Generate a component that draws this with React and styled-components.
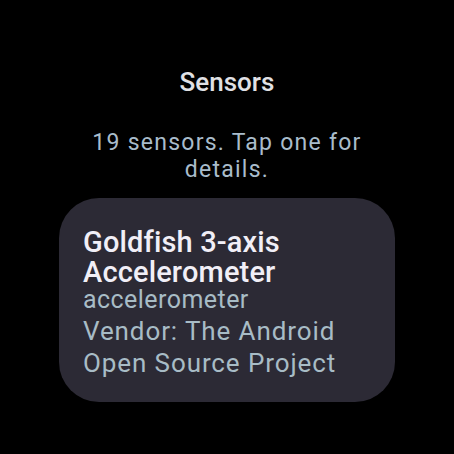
import styled, { createGlobalStyle } from "styled-components";

const GlobalStyle = createGlobalStyle`
    html, body {
        margin: 0;
        padding: 0;
        background: #000;
    }
    body {
        font-family: Roboto, "Noto Sans", sans-serif;
    }
`;

const Screen = styled.main`
    width: 454px;
    height: 454px;
    background: #000;
    display: flex;
    flex-direction: column;
    align-items: center;
    padding-top: 66px;
    box-sizing: border-box;
    overflow: hidden;
`;

const Title = styled.h1`
    margin: 0;
    font-size: 26px;
    font-weight: 500;
    line-height: 32px;
    color: #e0e1e5;
`;

const Subtitle = styled.p`
    margin: 31px 0 0;
    width: 300px;
    text-align: center;
    font-size: 23px;
    font-weight: 400;
    line-height: 27px;
    color: #a9bccb;
    letter-spacing: 1.25px;
`;

const Card = styled.section`
    margin-top: 15px;
    width: 336px;
    height: 204px;
    box-sizing: border-box;
    padding: 29px 24px 0;
    border-radius: 40px;
    background: #2c2a35;
    display: flex;
    flex-direction: column;
`;

const CardTitle = styled.h2`
    margin: 0;
    font-size: 29px;
    font-weight: 500;
    line-height: 30px;
    color: #f1eff7;
    letter-spacing: 0.15px;
`;

const CardLine = styled.p`
    margin: ${(p) => (p.small ? "0" : "2px 0 0")};
    font-size: ${(p) => (p.small ? "25px" : "26px")};
    line-height: ${(p) => (p.small ? "26px" : "32px")};
    font-weight: 400;
    color: #a8bcc6;
    letter-spacing: ${(p) => (p.small ? "0.45px" : "0.9px")};
`;

const App = () => {
    return (
        <>
            <GlobalStyle />
            <Screen>
                <Title>Sensors</Title>
                <Subtitle>19 sensors. Tap one for details.</Subtitle>
                <Card>
                    <CardTitle>Goldfish 3-axis Accelerometer</CardTitle>
                    <CardLine small>accelerometer</CardLine>
                    <CardLine>Vendor: The Android Open Source Project</CardLine>
                </Card>
            </Screen>
        </>
    );
};

export default App;
